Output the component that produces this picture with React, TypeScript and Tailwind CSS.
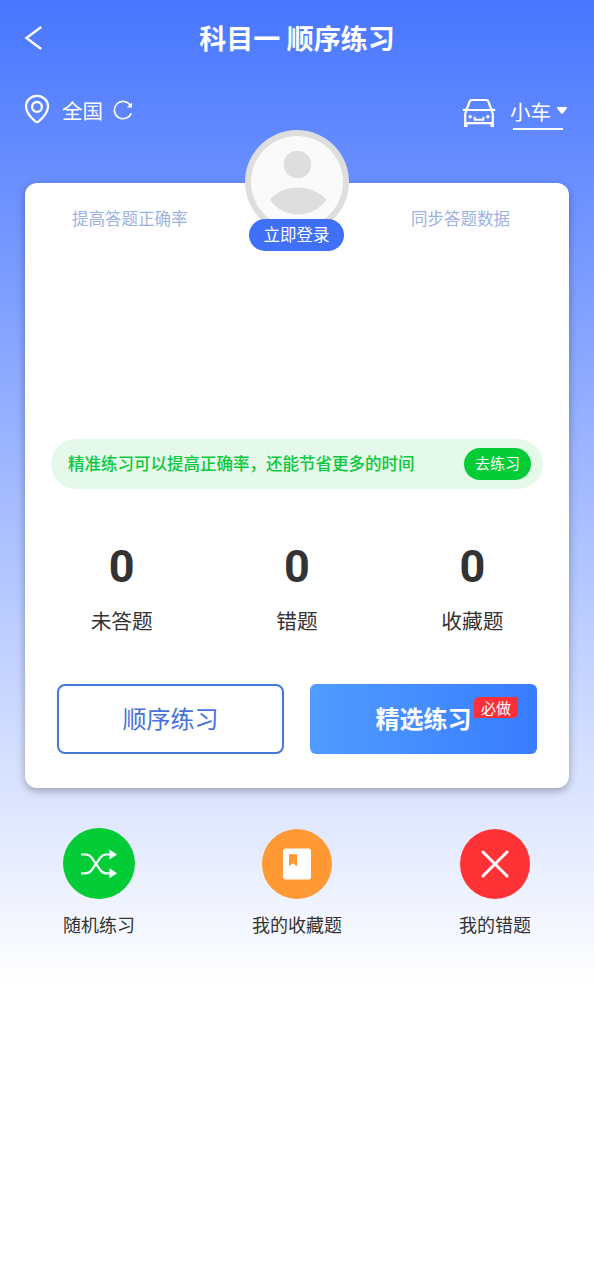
import type { ReactNode } from 'react'

const stats = [
  { label: '未答题', value: 0 },
  { label: '错题', value: 0 },
  { label: '收藏题', value: 0 },
]

function BackIcon() {
  return (
    <svg className="h-6 w-5" viewBox="0 0 20 24" fill="none" stroke="#fff" strokeWidth="2.4">
      <path d="M17.2 1 2.4 12l14.8 11" />
    </svg>
  )
}

function PinIcon() {
  return (
    <svg className="h-[30px] w-[26px]" viewBox="0 0 26 30" fill="none" stroke="#fff" strokeWidth="2.3">
      <path d="M13 1.900C6.800 1.900 2 6.500 2 12.400c0 5.800 4.300 10.600 9.300 15 1 .8 2.400.8 3.400 0 5-4.400 9.300-9.200 9.300-15C24 6.500 19.200 1.900 13 1.900Z" />
      <circle cx="13" cy="12.900" r="4.900" />
    </svg>
  )
}

function RefreshIcon() {
  return (
    <svg className="h-5 w-5" viewBox="0 0 20 20" fill="none" stroke="#fff" strokeWidth="1.6">
      <path d="M18.200 13.200A8.700 8.700 0 1 1 17.500 5.500" />
      <path d="M19 2.400v5.200h-5.200Z" fill="#fff" stroke="none" />
    </svg>
  )
}

function CarIcon() {
  return (
    <svg className="h-[30px] w-[34px]" viewBox="0 0 34 30" fill="none" stroke="#fff" strokeWidth="2.2">
      <path d="M4.500 12 7.700 3.400Q8.200 2 9.800 2h14.400q1.600 0 2.100 1.400L29.500 12" />
      <path d="M.8 11.800h4M29.200 11.800h4" />
      <path d="M4.500 12h25l1.300 4v9.200H3.200V16Z" strokeLinejoin="round" />
      <path d="M3.800 25v4M30.200 25v4" strokeWidth="3.400" />
      <path d="M12.600 18.800v2.900h8.800v-2.900" strokeWidth="1.900" />
      <circle cx="8.200" cy="18.800" r="1.700" fill="#fff" stroke="none" />
      <circle cx="25.800" cy="18.800" r="1.700" fill="#fff" stroke="none" />
    </svg>
  )
}

function Avatar() {
  return (
    <svg className="h-[104px] w-[104px]" viewBox="0 0 104 104">
      <circle cx="52" cy="52" r="52" fill="#dedede" />
      <circle cx="52" cy="52" r="46" fill="#fafafa" />
      <circle cx="52.500" cy="34.500" r="13.800" fill="#dedede" />
      <path d="M25 69.500C39 53.500 66 53.500 81.500 69.500C68 89.500 38 89.500 25 69.500Z" fill="#dedede" />
    </svg>
  )
}

function ShuffleIcon() {
  return (
    <svg className="h-[30px] w-9" viewBox="0 0 36 30" fill="none" stroke="#fff" strokeWidth="2.2">
      <path d="M0 5.500h5c2.600 0 4 .9 5.800 3.400l8.400 12c1.800 2.500 3.200 3.400 5.800 3.400h5" />
      <path d="M0 24.300h5c2.600 0 4-.9 5.800-3.400l8.400-12c1.800-2.500 3.200-3.400 5.800-3.400h5" />
      <path d="M28.500.500 36 5.500l-7.500 5ZM28.500 19.300l7.500 5-7.500 5Z" fill="#fff" stroke="none" />
    </svg>
  )
}

function BookIcon() {
  return (
    <svg className="h-8 w-7" viewBox="0 0 28 32">
      <rect y=".5" width="28" height="31" rx="2.500" fill="#fff" />
      <path d="M6 6.300h8v12l-4-3-4 3Z" fill="#ff9933" />
    </svg>
  )
}

function CrossIcon() {
  return (
    <svg className="h-[28px] w-[28px]" viewBox="0 0 28 28" stroke="#fff" strokeWidth="2.900" strokeLinecap="round">
      <path d="M2 2l24 24M26 2 2 26" />
    </svg>
  )
}

function Shortcut({ label, color, children }: { label: string; color: string; children: ReactNode }) {
  return (
    <div className="flex w-[100px] flex-col items-center">
      <div className={`flex items-center justify-center rounded-full ${color}`}>{children}</div>
      <span className="mt-[13px] text-[18px] leading-7 whitespace-nowrap text-[#333]">{label}</span>
    </div>
  )
}

export default function App() {
  return (
    <div className="h-[1280px] w-full overflow-hidden bg-white bg-[linear-gradient(180deg,#4876ff_0,#ffffff_985px)] bg-no-repeat font-[Roboto,'Noto_Sans_CJK_SC',sans-serif]">
      {/* Title bar */}
      <header className="grid h-[76px] grid-cols-[1fr_auto_1fr] items-center px-6 text-white">
        <BackIcon />
        <h1 className="pt-[3px] text-[27px] leading-10 font-bold">科目一 顺序练习</h1>
      </header>

      {/* Region and vehicle type */}
      <div className="flex h-[107px] items-start justify-between pr-[27px] pl-6 text-[20.5px] leading-[30px] text-white">
        <div className="flex items-start pt-[18px]">
          <PinIcon />
          <span className="mt-[3px] ml-3">全国</span>
          <span className="mt-1.5 ml-[10px]">
            <RefreshIcon />
          </span>
        </div>
        <div className="flex items-start pt-[22px]">
          <span className="mr-[14px]">
            <CarIcon />
          </span>
          <div className="flex flex-col items-center">
            <div className="flex items-center">
              <span>小车</span>
              <svg className="mb-[5px] ml-1.5 h-[7px] w-[10px]" viewBox="0 0 10 7" fill="#fff">
                <path d="M1 0h8q1.500.4.700 1.500L6 6.300q-1 1-2 0L.3 1.500Q-.5.400 1 0Z" />
              </svg>
            </div>
            <div className="mr-[2px] h-[1.500px] w-[50px] bg-white" />
          </div>
        </div>
      </div>

      <main className="mx-[25px] h-[605px] rounded-xl bg-white px-[26px] shadow-[0_3px_8px_rgba(0,0,0,0.3)]">
        {/* Login */}
        <div className="flex h-[256px] items-start justify-between pr-[33px] pl-[21px] text-[16.500px] leading-6 text-[#9db2e3]">
          <span className="w-[110px] pt-[25px] whitespace-nowrap">提高答题正确率</span>
          <div className="-mt-[53px] flex flex-col items-center">
            <Avatar />
            <button className="relative -mt-[15px] h-8 w-[95px] rounded-full bg-[#4070f8] pt-0.5 text-[16.500px] text-white">
              立即登录
            </button>
          </div>
          <span className="pt-[25px] whitespace-nowrap">同步答题数据</span>
        </div>

        {/* Tip banner */}
        <div className="flex h-[50px] items-center justify-between rounded-full bg-[#e5f9ea] pr-3 pl-[17px]">
          <span className="pt-[3px] text-[16.500px] font-medium whitespace-nowrap text-[#0bc83c]">
            精准练习可以提高正确率，还能节省更多的时间
          </span>
          <button className="h-8 w-[67px] rounded-full bg-[#04cc37] pt-px text-[15px] text-white">去练习</button>
        </div>

        {/* Stats */}
        <div className="-mx-[17px] grid grid-cols-3 pt-[54px] text-center text-[#333]">
          {stats.map((item) => (
            <div key={item.label}>
              <div className="text-[45px] leading-[47px] font-bold">{item.value}</div>
              <div className="mt-[17px] text-[20.700px] leading-[30px]">{item.label}</div>
            </div>
          ))}
        </div>

        {/* Practice buttons */}
        <div className="mt-[47px] flex gap-[26px] px-1.5">
          <button className="h-[70px] w-[227px] rounded-lg border-2 border-[#4778d8] pt-0.5 text-[24px] text-[#4672da]">
            顺序练习
          </button>
          <button className="relative h-[70px] w-[227px] rounded-md bg-linear-to-r from-[#509cff] to-[#397cff] pt-0.5 text-[24px] font-bold text-white">
            精选练习
            <span className="absolute top-[13px] left-[164px] flex h-[21px] w-[44px] items-center justify-center rounded-tl-[5px] rounded-tr-[2px] rounded-br-[5px] bg-[#fc3038] pt-[3px] text-[15px] leading-none font-normal">
              必做
            </span>
          </button>
        </div>
      </main>

      {/* Shortcuts */}
      <nav className="flex justify-between px-[49px] pt-10">
        <Shortcut label="随机练习" color="h-[71px] w-[72px] bg-[#04cc37]">
          <ShuffleIcon />
        </Shortcut>
        <Shortcut label="我的收藏题" color="my-[0.5px] h-[70px] w-[70px] bg-[#ff9933]">
          <BookIcon />
        </Shortcut>
        <Shortcut label="我的错题" color="my-[0.5px] h-[70px] w-[70px] bg-[#ff3335]">
          <CrossIcon />
        </Shortcut>
      </nav>
    </div>
  )
}
